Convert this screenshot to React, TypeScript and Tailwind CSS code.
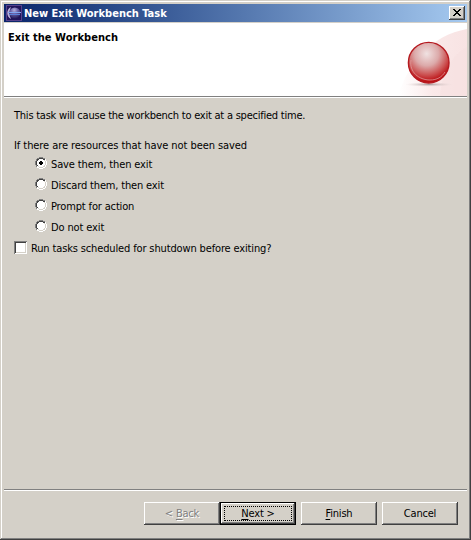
import React, { useState } from 'react';

const raised =
  'shadow-[inset_-1px_-1px_#404040,inset_1px_1px_#ffffff,inset_-2px_-2px_#808080]';

function EclipseIcon() {
  return (
    <svg width="16" height="16" viewBox="0 0 16 16" className="shrink-0">
      <defs>
        <radialGradient id="moon" cx="0.45" cy="0.25" r="0.8">
          <stop offset="0" stopColor="#b4b0dc" />
          <stop offset="0.4" stopColor="#6a62a8" />
          <stop offset="1" stopColor="#1c1450" />
        </radialGradient>
      </defs>
      <rect x="0.5" y="0.5" width="15" height="15" fill="#21145a" stroke="#56408c" />
      <path d="M5 2C0 4 0 12 5 14C3 10 3 6 5 2Z" fill="#b8b0d8" />
      <circle cx="8.8" cy="8" r="5.6" fill="url(#moon)" />
      <path d="M2 7.5H15" stroke="#7fa6f0" />
      <path d="M3 9.5H14" stroke="#5c80d8" />
    </svg>
  );
}

function HeaderArt() {
  return (
    <svg width="75" height="73" viewBox="0 0 75 73" className="shrink-0">
      <defs>
        <radialGradient id="ball" cx="0.45" cy="0.28" r="0.74">
          <stop offset="0" stopColor="#f0e2e2" />
          <stop offset="0.4" stopColor="#dcaaaa" />
          <stop offset="0.7" stopColor="#cc5252" />
          <stop offset="0.9" stopColor="#bd1418" />
          <stop offset="1" stopColor="#b80c10" />
        </radialGradient>
        <linearGradient id="wash" x1="0" y1="0" x2="1" y2="0">
          <stop offset="0" stopColor="#fbecec" stopOpacity="0" />
          <stop offset="0.5" stopColor="#fae9e9" />
          <stop offset="1" stopColor="#f8e3e3" />
        </linearGradient>
        <radialGradient id="shade">
          <stop offset="0" stopColor="#a89c9c" />
          <stop offset="1" stopColor="#e8d8d8" stopOpacity="0" />
        </radialGradient>
      </defs>
      <path d="M6 73C16 40 40 12 75 6V73Z" fill="url(#wash)" />
      <path d="M48 73C50 50 60 32 75 24V73Z" fill="#f6dfdf" fillOpacity="0.5" />
      <ellipse cx="37" cy="61.5" rx="24" ry="2.3" fill="url(#shade)" />
      <circle cx="36.7" cy="39.7" r="20.3" fill="url(#ball)" stroke="#b51a20" strokeWidth="1.4" />
      <path d="M19 37C17 49 27 57 38 57C45 57 50 54 53 49" fill="none" stroke="#e0a0a0" strokeOpacity="0.75" />
    </svg>
  );
}

function Radio({ label, tracking, checked, onSelect }: { label: string; tracking: string; checked: boolean; onSelect: () => void }) {
  return (
    <div role="radio" aria-checked={checked} onClick={onSelect} className="flex h-[21px] items-start">
      <svg width="12" height="12" viewBox="0 0 12 12" shapeRendering="crispEdges" className="mr-1 shrink-0">
        <path d="M4 1h4v1h2v2h1v4h-1v2h-2v1h-4v-1h-2v-2h-1v-4h1v-2h2z" fill="#fff" />
        <path d="M4 0h4v1h2v1h-2v-1h-4v1h-2v2h-1v4h1v2h-1v-2h-1v-4h1v-2h1v-1h2z" fill="#808080" />
        <path d="M4 1h4v1h2v1h-2v-1h-4v1h-1v1h-1v4h1v1h-1v-1h-1v-4h1v-2h2z" fill="#404040" />
        <path d="M10 2h1v2h1v4h-1v2h-1v1h-2v1h-4v-1h-2v-1h2v1h4v-1h2v-2h1v-4h-1z" fill="#fff" />
        <path d="M9 3h1v1h1v4h-1v2h-2v1h-4v-1h-1v-1h1v1h4v-1h1v-1h1v-4h-1z" fill="#d4d0c8" />
        {checked && <path d="M5 4h2v1h1v2h-1v1h-2v-1h-1v-2h1z" fill="#000" />}
      </svg>
      <span className={`mt-px ${tracking}`}>{label}</span>
    </div>
  );
}

export default function App() {
  const [choice, setChoice] = useState(0);
  const options = [
    { label: 'Save them, then exit', tracking: 'tracking-[-0.12px]' },
    { label: 'Discard them, then exit', tracking: 'tracking-[-0.16px]' },
    { label: 'Prompt for action', tracking: 'tracking-[-0.15px]' },
    { label: 'Do not exit', tracking: 'tracking-[-0.12px]' },
  ];
  return (
    <div className="flex h-[540px] w-[471px] flex-col whitespace-nowrap bg-[#d4d0c8] p-1 font-['DejaVu_Sans_Condensed','DejaVu_Sans',sans-serif] text-[11px] leading-[14px] text-black [font-stretch:condensed] shadow-[inset_-1px_-1px_#404040,inset_1px_1px_#d4d0c8,inset_-2px_-2px_#808080,inset_2px_2px_#ffffff]">
      <div className="flex h-[18px] shrink-0 items-center bg-linear-to-r from-[#0a246a] to-[#a6caf0] px-[2px]">
        <EclipseIcon />
        <span className="mt-px ml-[2px] font-bold text-white">New Exit Workbench Task</span>
        <button aria-label="Close" className={`ml-auto flex h-[14px] w-4 items-center justify-center bg-[#d4d0c8] ${raised}`}>
          <svg width="8" height="7" viewBox="0 0 8 7" shapeRendering="crispEdges" className="mb-px">
            <path d="M0 0h2v1h1v1h2v-1h1v-1h2v1h-1v1h-1v1h-1v1h1v1h1v1h1v1h-2v-1h-1v-1h-2v1h-1v1h-2v-1h1v-1h1v-1h1v-1h-1v-1h-1v-1h-1z" />
          </svg>
        </button>
      </div>
      <div className="mt-px flex h-[75px] shrink-0 border-b border-white bg-white">
        <div className="flex w-full justify-between border-b border-[#808080]">
          <h1 className="mt-2 ml-1 font-bold tracking-[0.05px]">Exit the Workbench</h1>
          <HeaderArt />
        </div>
      </div>
      <div className="flex grow flex-col pt-[11px] pl-[10px]">
        <p className="tracking-[-0.23px]">This task will cause the workbench to exit at a specified time.</p>
        <p className="mt-4 tracking-[-0.07px]">If there are resources that have not been saved</p>
        <div role="radiogroup" className="mt-[4px] pl-[21px]">
          {options.map((o, i) => (
            <Radio key={o.label} {...o} checked={choice === i} onSelect={() => setChoice(i)} />
          ))}
        </div>
        <div className="flex items-start">
          <span className="mr-1 size-[13px] shrink-0 bg-white shadow-[inset_1px_1px_#808080,inset_-1px_-1px_#fff,inset_2px_2px_#404040,inset_-2px_-2px_#d4d0c8]" />
          <span className="mt-px tracking-[-0.14px]">Run tasks scheduled for shutdown before exiting?</span>
        </div>
      </div>
      <div className="h-[2px] shrink-0 border-t border-[#808080] bg-white" />
      <div className="flex h-[45px] shrink-0 items-start justify-end pt-[11px] pr-[9px] tracking-[-0.2px]">
        <button className={`h-[23px] w-[76px] text-[#808080] [text-shadow:1px_1px_#fff] ${raised}`}>&lt; <u className="underline-offset-2">B</u>ack</button>
        <button className="h-[23px] w-[76px] border border-black p-[3px] shadow-[inset_-1px_-1px_#404040,inset_1px_1px_#ffffff,inset_-2px_-2px_#808080]">
          <span className="flex size-full items-center justify-center border border-dotted border-black"><u className="underline-offset-2">N</u>ext&nbsp;&gt;</span>
        </button>
        <button className={`ml-[5px] h-[23px] w-[76px] ${raised}`}><u className="underline-offset-2">F</u>inish</button>
        <button className={`ml-[5px] h-[23px] w-[76px] ${raised}`}>Cancel</button>
      </div>
    </div>
  );
}
